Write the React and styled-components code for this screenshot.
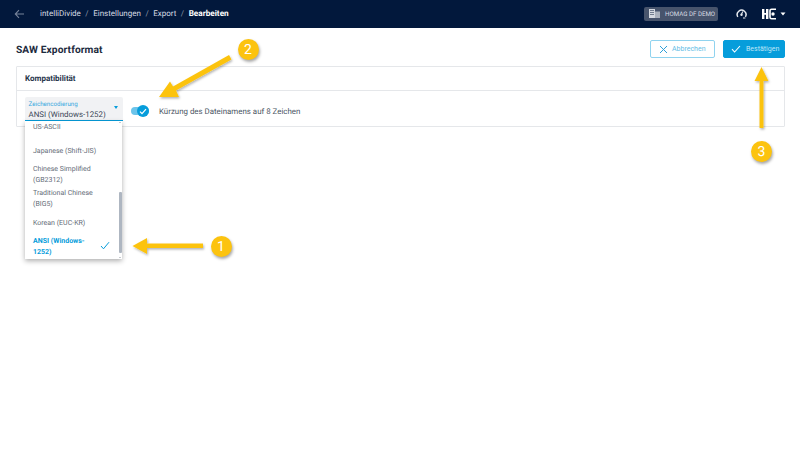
import React from 'react';
import styled, { createGlobalStyle } from 'styled-components';

const Global = createGlobalStyle`
  html, body { margin: 0; padding: 0; background: #fff; }
  body { font-family: Roboto, "Liberation Sans", sans-serif; width: 800px; height: 450px; overflow: hidden; text-rendering: geometricPrecision; }
`;
const Page = styled.div`position: relative; width: 800px; height: 450px; overflow: hidden;`;
const TopBar = styled.header`
  height: 27.5px; background: #02183c; display: flex; align-items: center; padding: 0 14px 0 14px; box-sizing: border-box;
`;
const Crumbs = styled.nav`
  display: flex; align-items: center; margin-left: 15px; gap: 4.5px; font-size: 8px; color: #d5dae3; flex: 1;
`;
const Sep = styled.span`color: #8d97a8;`;
const Current = styled.span`font-weight: 700; font-size: 8.2px; color: #fff;`;
const Tenant = styled.div`
  width: 74px; height: 14px; margin-right: 18px; background: #47546c; border-radius: 2px; display: flex; align-items: center;
  gap: 5px; padding-left: 5px; box-sizing: border-box; color: #d9dde4; font-size: 6.2px; white-space: nowrap;
`;
const Logo = styled.div`display: flex; align-items: center; margin-left: 15px; gap: 3px;`;
const Content = styled.main`padding: 12.5px 15px 0 16px;`;
const TitleRow = styled.div`display: flex; align-items: center; justify-content: space-between; height: 18px; margin-bottom: 8px;`;
const Title = styled.h1`margin: 0; padding-top: 2px; font-size: 10.2px; font-weight: 700; color: #1d2b3e; letter-spacing: .1px;`;
const Actions = styled.div`display: flex; gap: 8px;`;
const Button = styled.button`
  width: ${p => p.$primary ? '62px' : '65px'}; height: 18px; box-sizing: border-box; padding: 0 0 0 ${p => p.$primary ? '7px' : '8px'};
  display: flex; align-items: center; gap: ${p => p.$primary ? '5px' : '4px'};
  font: 400 7px Roboto, sans-serif; border-radius: 2px; cursor: pointer;
  background: ${p => p.$primary ? '#069ddb' : '#fff'};
  color: ${p => p.$primary ? '#bfe6f7' : '#63bde6'};
  border: 1px solid ${p => p.$primary ? '#069ddb' : '#90d3ef'};
`;
const Card = styled.section`border: 1px solid #e5e7ea; border-radius: 1px; height: 61px; box-sizing: border-box;`;
const CardHead = styled.div`
  height: 23.5px; border-bottom: 1px solid #e5e7ea; display: flex; align-items: center; padding-left: 8px;
  font-size: 8px; font-weight: 700; color: #26344a; box-sizing: border-box;
`;
const CardBody = styled.div`display: flex; align-items: flex-start; padding: 6.5px 0 0 8px; gap: 8px;`;
const Select = styled.div`
  position: relative; width: 98px; height: 24px; background: #f1f2f4; border-bottom: 1px solid #069ddb; box-sizing: border-box;
  padding: 3px 0 0 3.5px; border-radius: 2px 2px 0 0;
`;
const SelectLabel = styled.div`font-size: 6.2px; color: #38a9df; line-height: 8px;`;
const SelectValue = styled.div`font-size: 7.9px; color: #3b4656; line-height: 13px; white-space: nowrap;`;
const Caret = styled.i`
  position: absolute; right: 5px; top: 9px; width: 0; height: 0; border-left: 2.5px solid transparent; border-right: 2.5px solid transparent;
  border-top: 3px solid #069ddb;
`;
const Toggle = styled.div`position: relative; width: 18px; height: 8px; margin-top: 10px; background: #6cc4ea; border-radius: 4px;`;
const Knob = styled.div`
  position: absolute; right: 0; top: -2px; width: 12px; height: 12px; border-radius: 50%; background: #069ddb;
  display: flex; align-items: center; justify-content: center;
`;
const ToggleLabel = styled.div`font-size: 7.9px; color: #4b5564; margin: 9.5px 0 0 2px; line-height: 10px;`;
const Menu = styled.div`
  position: absolute; left: 25px; top: 121px; width: 97px; height: 137.5px; background: #fff; overflow: hidden;
  box-shadow: 0 2px 5px rgba(0,0,0,.32);
`;
const MenuItem = styled.div`
  position: absolute; left: 8px; top: ${p => p.$top}px; width: 68px; font-size: 7px; line-height: 10.5px;
  color: ${p => p.$active ? '#069ddb' : '#646c78'}; font-weight: ${p => p.$active ? 700 : 400};
`;
const MenuCheck = styled.svg`position: absolute; left: 75px; top: 120px;`;
const ScrollTrack = styled.div`position: absolute; right: 0; top: 0; width: 4px; height: 137.5px;`;
const ScrollThumb = styled.div`position: absolute; left: 1px; top: 71px; width: 2.5px; height: 61px; background: #aeb6c1; border-radius: 1px;`;
const ScrollEnd = styled.i`
  position: absolute; left: 1px; ${p => p.$bottom ? 'bottom: 1px; border-top: 1.5px solid #8b93a0;' : 'top: 1px; border-bottom: 1.5px solid #8b93a0;'}
  width: 0; height: 0; border-left: 1.25px solid transparent; border-right: 1.25px solid transparent;
`;
const Arrows = styled.svg`position: absolute; left: 0; top: 0; width: 800px; height: 450px; pointer-events: none;`;
const Badge = styled.div`
  position: absolute; left: ${p => p.$x - 10.5}px; top: ${p => p.$y - 10.5}px; width: 21px; height: 21px; border-radius: 50%;
  background: #fcc30f; color: #fff; font-size: 14px; display: flex; align-items: center; justify-content: center;
  box-shadow: 1px 2px 3px rgba(0,0,0,.35);
`;

export default function App() {
  return (
    <Page>
      <Global />
      <TopBar>
        <svg width="11" height="10" viewBox="0 0 11 10" fill="none" stroke="#77839a" strokeWidth="1.1"><path d="M10 5H1.5M5 1.2 1.3 5 5 8.8" /></svg>
        <Crumbs>
          <span>intelliDivide</span><Sep>/</Sep><span>Einstellungen</span><Sep>/</Sep><span>Export</span><Sep>/</Sep><Current>Bearbeiten</Current>
        </Crumbs>
        <Tenant>
          <svg width="11" height="9" viewBox="0 0 11 9"><path d="M0 0h6v9H0z" fill="#d5d9e0" /><path d="M6 2.5h5V9H6z" fill="#a9b0bc" /><path d="M1 1.5h4M1 3.5h4M1 5.5h4" stroke="#47546c" strokeWidth=".7" /></svg>
          <span>HOMAG DF DEMO</span>
        </Tenant>
        <svg width="11" height="11" viewBox="0 0 11 11" fill="none"><path d="M1.8 8.8A4.4 4.4 0 1 1 9.4 8.8" stroke="#e6e9ee" strokeWidth="1.5" /><path d="M6.8 3.4 5.5 6.2" stroke="#e6e9ee" strokeWidth="1.1" /><circle cx="5.5" cy="6.8" r="1.2" fill="#e6e9ee" /><path d="M7 10h2.400" stroke="#e6e9ee" /></svg>
        <Logo>
          <svg width="15" height="12" viewBox="0 0 15 12"><path d="M0 1h2.400v10H0zM4 1h2.400v10H4zM2 5h3v1.800H2z" fill="#fff" /><path d="M14 1.200H9.600A1.600 1.600 0 0 0 8 2.800v6.400a1.600 1.600 0 0 0 1.600 1.600H14" stroke="#fff" strokeWidth="1.600" fill="none" /><circle cx="11" cy="6" r="1.700" fill="#fff" /></svg>
          <svg width="6" height="4" viewBox="0 0 6 4"><path d="M.5.500h5L3 3.500z" fill="#fff" /></svg>
        </Logo>
      </TopBar>
      <Content>
        <TitleRow>
          <Title>SAW Exportformat</Title>
          <Actions>
            <Button>
              <svg width="9" height="9" viewBox="0 0 9 9" stroke="#2f9fd8" strokeWidth="1" fill="none"><path d="M1 1l7 7M8 1 1 8" /></svg>
              Abbrechen
            </Button>
            <Button $primary>
              <svg width="10" height="8" viewBox="0 0 10 8" stroke="#fff" strokeWidth="1.100" fill="none"><path d="M1 4.200 3.600 7 9 1" /></svg>
              Bestätigen
            </Button>
          </Actions>
        </TitleRow>
        <Card>
          <CardHead>Kompatibilität</CardHead>
          <CardBody>
            <Select>
              <SelectLabel>Zeichencodierung</SelectLabel>
              <SelectValue>ANSI (Windows-1252)</SelectValue>
              <Caret />
            </Select>
            <Toggle>
              <Knob>
                <svg width="8" height="7" viewBox="0 0 8 7" stroke="#fff" strokeWidth="1.200" fill="none"><path d="M1 3.600 3 5.600 7 1.200" /></svg>
              </Knob>
            </Toggle>
            <ToggleLabel>Kürzung des Dateinamens auf 8 Zeichen</ToggleLabel>
          </CardBody>
        </Card>
      </Content>
      <Menu>
        <MenuItem $top={1}>US-ASCII</MenuItem>
        <MenuItem $top={25}>Japanese (Shift-JIS)</MenuItem>
        <MenuItem $top={43}>Chinese Simplified (GB2312)</MenuItem>
        <MenuItem $top={67}>Traditional Chinese (BIG5)</MenuItem>
        <MenuItem $top={97}>Korean (EUC-KR)</MenuItem>
        <MenuItem $top={115} $active>ANSI (Windows-1252)</MenuItem>
        <MenuCheck width="10" height="9" viewBox="0 0 10 9" stroke="#069ddb" strokeWidth="1" fill="none"><path d="M1 5 3.500 7.800 9 1.200" /></MenuCheck>
        <ScrollTrack><ScrollEnd /><ScrollThumb /><ScrollEnd $bottom /></ScrollTrack>
      </Menu>
      <Arrows viewBox="0 0 800 450">
        <defs>
          <filter id="s" x="-30%" y="-30%" width="160%" height="160%"><feDropShadow dx="1" dy="1.500" stdDeviation="1.200" floodColor="#000" floodOpacity=".3" /></filter>
        </defs>
        <g filter="url(#s)" fill="#fcc30f">
          <path d="M229 55 231.500 59.500 176 90.500 179 97 159 97 170 81.500 173 86.500Z" />
          <path d="M759.500 128V81H754.500L761.500 67 768.500 81H763.500V128Z" />
          <path d="M203 243.500V248H147V254L132.500 246 147 238V243.500Z" />
        </g>
      </Arrows>
      <Badge $x={248} $y={49.5}>2</Badge>
      <Badge $x={761.5} $y={151.5}>3</Badge>
      <Badge $x={221} $y={246.5}>1</Badge>
    </Page>
  );
}
